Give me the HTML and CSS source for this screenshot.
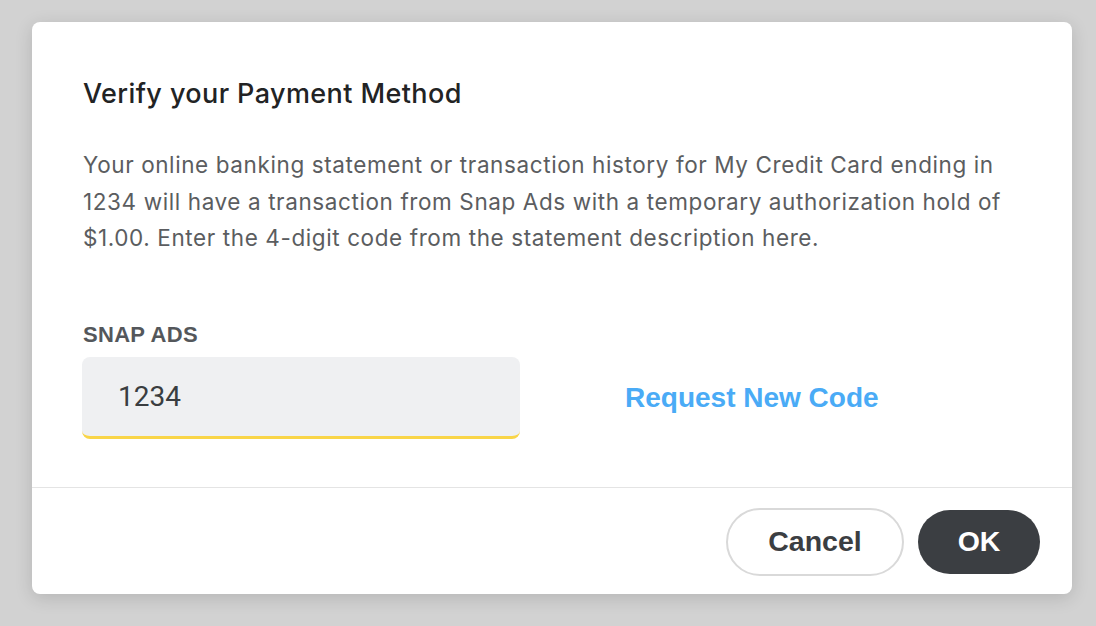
FILE: index.html
```html
<!DOCTYPE html>
<html lang="en">
<head>
<meta charset="utf-8">
<title>Verify your Payment Method</title>
<link rel="stylesheet" href="styles.css">
</head>
<body>
<div class="page">
  <div class="dialog">
    <div class="dialog-body">
      <h1 class="title">Verify your Payment Method</h1>
      <p class="desc">Your online banking statement or transaction history for My Credit Card ending in 1234 will have a transaction from Snap Ads with a temporary authorization hold of $1.00. Enter the 4-digit code from the statement description here.</p>
      <div class="field">
        <label class="label" for="code">SNAP ADS</label>
        <div class="field-row">
          <input id="code" class="input" type="text" value="1234">
          <a class="link" href="#">Request New Code</a>
        </div>
      </div>
    </div>
    <div class="dialog-footer">
      <button class="btn btn-cancel" type="button">Cancel</button>
      <button class="btn btn-ok" type="button">OK</button>
    </div>
  </div>
</div>
</body>
</html>
```
FILE: styles.css
```css
html, body {
  margin: 0;
  padding: 0;
}
body {
  background: #d2d2d2;
  width: 1096px;
  height: 626px;
  overflow: hidden;
  font-family: "Inter", "Liberation Sans", sans-serif;
}
.page {
  padding: 22px 24px 0 32px;
}
.dialog {
  width: 1040px;
  height: 572px;
  background: #fff;
  border-radius: 8px;
  box-shadow: 0 4px 18px rgba(0, 0, 0, 0.14);
  display: flex;
  flex-direction: column;
}
.dialog-body {
  padding: 56px 30px 48px 51px;
  border-bottom: 1px solid #e4e4e4;
}
.title {
  margin: 0;
  font-size: 27px;
  line-height: 32px;
  font-weight: 500;
  color: #222324;
  letter-spacing: 0.4px;
}
.desc {
  margin: 37px 0 0;
  font-size: 22.5px;
  line-height: 36.5px;
  color: #5b5d60;
  letter-spacing: 0.6px;
}
.field {
  margin-top: 66px;
}
.label {
  display: block;
  font-family: "Liberation Sans", Arial, sans-serif;
  font-weight: 700;
  font-size: 22px;
  line-height: 24px;
  color: #54575b;
  letter-spacing: 0.3px;
}
.field-row {
  margin-top: 10px;
  display: flex;
  align-items: center;
}
.input {
  box-sizing: border-box;
  width: 438px;
  height: 82px;
  margin: 0 0 0 -1px;
  padding: 0 0 0 36px;
  border: none;
  border-bottom: 3px solid #f9d548;
  border-radius: 8px;
  background: #eff0f2;
  font-family: "Roboto", "Liberation Sans", sans-serif;
  font-size: 28px;
  color: #3a3d40;
  outline: none;
}
.link {
  margin-left: 105px;
  font-family: "Liberation Sans", Arial, sans-serif;
  font-weight: 700;
  font-size: 28px;
  color: #4aabf6;
  text-decoration: none;
}
.dialog-footer {
  flex: 1;
  display: flex;
  align-items: center;
  justify-content: flex-end;
  gap: 14px;
  padding: 2px 32px 0 0;
}
.btn {
  box-sizing: border-box;
  height: 64px;
  border-radius: 32px;
  font-family: "Liberation Sans", Arial, sans-serif;
  font-weight: 700;
  font-size: 28.5px;
  cursor: pointer;
}
.btn-cancel {
  width: 178px;
  height: 68px;
  border-radius: 34px;
  background: #fff;
  border: 2px solid #d9d9d9;
  color: #3b3e42;
}
.btn-ok {
  width: 122px;
  background: #3b3e42;
  border: none;
  color: #fff;
}
```
